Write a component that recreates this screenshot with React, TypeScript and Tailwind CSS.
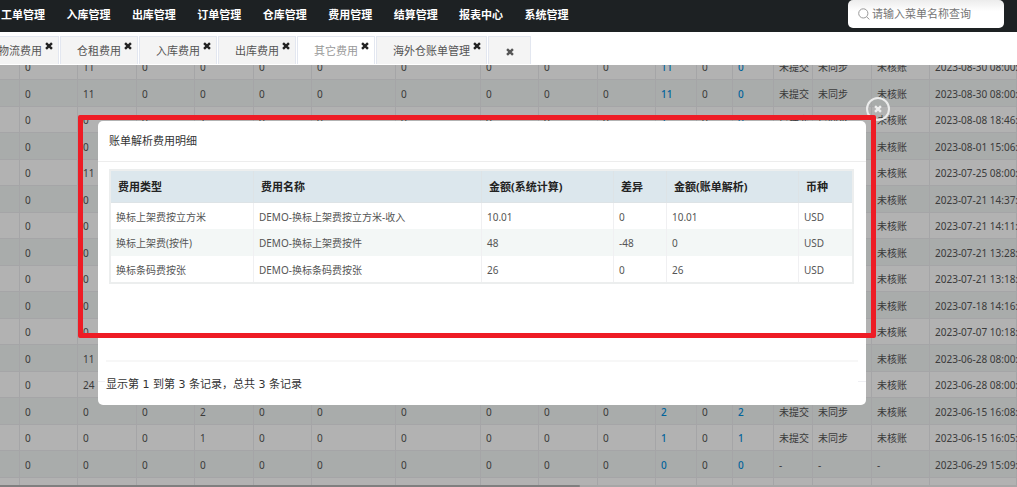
import React from "react";

const menus = ["工单管理", "入库管理", "出库管理", "订单管理", "仓库管理", "费用管理", "结算管理", "报表中心", "系统管理"];
const tabs = ["物流费用", "仓租费用", "入库费用", "出库费用", "其它费用", "海外仓账单管理"];
const activeTab = "其它费用";

const zeros = (n: number): string[] => Array(n).fill("0");
const blanks = (n: number): string[] => Array(n).fill("");

const partial = (first: string, date: string): string[] => ["", "0", first, ...blanks(13), "未核账", date];

const rows: string[][] = [
  ["", "0", "11", ...zeros(8), "11", "0", "0", "未提交", "未同步", "未核账", "2023-08-30 08:00:"],
  ["", "0", "11", ...zeros(8), "11", "0", "0", "未提交", "未同步", "未核账", "2023-08-30 08:00:"],
  ["", "0", "0", "0", "1", ...zeros(6), "1", "0", "0", "已提交", "已同步", "未核账", "2023-08-08 18:46:"],
  partial("0", "2023-08-01 15:06:"),
  partial("11", "2023-07-25 08:00:"),
  partial("0", "2023-07-21 14:37:"),
  partial("0", "2023-07-21 14:11:"),
  partial("0", "2023-07-21 13:28:"),
  partial("0", "2023-07-21 13:18:"),
  partial("0", "2023-07-18 14:16:"),
  partial("0", "2023-07-07 10:18:"),
  partial("11", "2023-06-28 08:00:"),
  partial("24", "2023-06-28 08:00:"),
  ["", "0", "0", "0", "2", ...zeros(6), "2", "0", "2", "未提交", "未同步", "未核账", "2023-06-15 16:08:"],
  ["", "0", "0", "0", "1", ...zeros(6), "1", "0", "1", "未提交", "未同步", "未核账", "2023-06-15 16:05:"],
  ["", "0", "0", "0", "0", ...zeros(6), "0", "0", "0", "-", "-", "-", "2023-06-29 15:09:"],
  blanks(18),
];

const linkColumns = [11, 13];

const detailHeads = ["费用类型", "费用名称", "金额(系统计算)", "差异", "金额(账单解析)", "币种"];
const detailRows = [
  ["换标上架费按立方米", "DEMO-换标上架费按立方米-收入", "10.01", "0", "10.01", "USD"],
  ["换标上架费(按件)", "DEMO-换标上架费按件", "48", "-48", "0", "USD"],
  ["换标条码费按张", "DEMO-换标条码费按张", "26", "0", "26", "USD"],
];

function Cross({ className }: { className: string }) {
  return (
    <svg viewBox="0 0 9 9" className={className} aria-hidden="true">
      <path d="M1.2 1.2 7.8 7.8M7.8 1.2 1.2 7.8" stroke="currentColor" strokeWidth="2.7" fill="none" />
    </svg>
  );
}

function TopBar() {
  return (
    <header className="flex h-8 shrink-0 items-start justify-between bg-[#1d2123] pr-[13px]">
      <nav className="grid h-7 w-[590px] shrink-0 grid-cols-9 items-center pl-px pt-[2px]">
        {menus.map((m) => (
          <a key={m} href="#" className="whitespace-nowrap text-[11px] font-bold leading-4 text-white">
            {m}
          </a>
        ))}
      </nav>
      <label className="flex h-7 w-[156px] items-center gap-[2px] rounded-[5px] bg-linear-to-b from-[#ececec] to-white to-40% pl-[10px]">
        <svg viewBox="0 0 12 12" className="h-3 w-3 shrink-0" aria-hidden="true">
          <circle cx="5.3" cy="5.4" r="4.6" fill="none" stroke="#999" />
          <path d="M8.6 8.8 11.4 11.4" stroke="#999" />
        </svg>
        <input
          type="text"
          aria-label="请输入菜单名称查询"
          placeholder="请输入菜单名称查询"
          className="w-full min-w-0 bg-transparent text-[11px] text-[#555] outline-none placeholder:text-[#757575]"
        />
      </label>
    </header>
  );
}

function TabBar() {
  return (
    <div className="flex h-[33px] shrink-0 items-end overflow-hidden bg-white pb-px">
      <div className="-ml-[19px] flex h-7 gap-px">
        {tabs.map((t) => (
          <div
            key={t}
            className={
              "flex shrink-0 items-start gap-[3px] border border-b-0 border-[#e3e7f0] pl-4 pr-[5px] " +
              (t === activeTab ? "bg-white text-[#999]" : "bg-[#f4f4f4] text-[#555]")
            }
          >
            <a href="#" className="pt-[6px] text-[11px] leading-4">
              {t}
            </a>
            <button type="button" aria-label="关闭" className="pt-[5px] text-[#222]">
              <Cross className="h-2 w-2" />
            </button>
          </div>
        ))}
        <button
          type="button"
          aria-label="关闭全部"
          className="flex w-[43px] items-center justify-center border border-b-0 border-[#e3e7f0] bg-[#f4f4f4] pt-[2px] text-[#555]"
        >
          <Cross className="h-2 w-2" />
        </button>
      </div>
    </div>
  );
}

function BillTable() {
  return (
    <table className="-mt-[11px] w-full table-fixed border-separate border-spacing-0 text-[10px] leading-4 text-[#555]">
      <colgroup>
        <col className="w-5" />
        <col className="w-[58px]" />
        <col className="w-[59px]" />
        <col className="w-[58px]" />
        <col className="w-[59px]" />
        <col className="w-[58px]" />
        <col className="w-[84px]" />
        <col className="w-[85px]" />
        <col className="w-[58px]" />
        <col className="w-[59px]" />
        <col className="w-[58px]" />
        <col className="w-[41px]" />
        <col className="w-9" />
        <col className="w-[41px]" />
        <col className="w-[39px]" />
        <col className="w-[59px]" />
        <col className="w-[58px]" />
        <col />
      </colgroup>
      <tbody>
        {rows.map((row, r) => (
          <tr key={r} className="h-[26px] bg-white even:h-[27px] even:bg-[#f3f6f5]">
            {row.map((v, c) => (
              <td key={c} className="whitespace-nowrap border-b border-r border-[#ededf0] p-0 pl-[5px] pt-px">
                {linkColumns.includes(c) && v ? (
                  <a href="#" className="font-medium text-[#0090e0]">
                    {v}
                  </a>
                ) : (
                  v
                )}
              </td>
            ))}
          </tr>
        ))}
      </tbody>
    </table>
  );
}

function DetailDialog() {
  return (
    <section role="dialog" aria-label="账单解析费用明细" className="relative w-full rounded-[5px] bg-white">
      <h2 className="border-b border-[#ededed] px-[11px] py-3 text-[11px] leading-4 text-[#333]">账单解析费用明细</h2>
      <div className="pl-[11px] pr-3 pt-[7px]">
        <div className="border-2 border-[#eceeee]">
          <table className="w-full table-fixed border-separate border-spacing-0 text-left">
            <colgroup>
              <col className="w-[143px]" />
              <col className="w-[228px]" />
              <col className="w-[132px]" />
              <col className="w-[53px]" />
              <col className="w-[132px]" />
              <col className="w-[53px]" />
            </colgroup>
            <thead>
              <tr className="h-8 bg-[#dce7ed]">
                {detailHeads.map((h) => (
                  <th
                    key={h}
                    className="whitespace-nowrap border-b border-r border-[#dde3e6] p-0 pl-[7px] pt-px text-[11px] font-bold leading-4 text-[#222] last:border-r-0"
                  >
                    {h}
                  </th>
                ))}
              </tr>
            </thead>
            <tbody>
              {detailRows.map((row) => (
                <tr key={row[0]} className="h-[26px] even:h-[27px] even:bg-[#f3f7f6]">
                  {row.map((v, c) => (
                    <td
                      key={c}
                      className="whitespace-nowrap border-r border-[#f0f0f2] p-0 pl-[5px] pt-px text-[10px] leading-4 text-[#555] last:border-r-0"
                    >
                      {v}
                    </td>
                  ))}
                </tr>
              ))}
            </tbody>
          </table>
        </div>
      </div>
      <footer className="mx-2 mt-[76px] border-t-2 border-[#f7f7f7] pb-3 pt-[15px] font-['DejaVu_Sans','Noto_Sans_CJK_SC',sans-serif] text-[11px] leading-4 text-[#333]">
        显示第 1 到第 3 条记录，总共 3 条记录
      </footer>
      <button
        type="button"
        aria-label="关闭"
        className="absolute -right-6 -top-6 flex h-6 w-6 items-center justify-center rounded-full border-2 border-[#ececec] text-[#eee]"
      >
        <Cross className="h-2 w-2" />
      </button>
      <div className="pointer-events-none absolute -left-5 -right-[10px] -top-[6px] h-[223px] rounded-[2px] border-5 border-[#ee1c25]" />
      <span className="absolute bottom-[23px] left-0 h-px w-[7px] bg-[#efeff3]" />
      <span className="absolute bottom-[23px] right-0 h-px w-2 bg-[#efeff3]" />
    </section>
  );
}

export default function App() {
  return (
    <div className="flex h-screen flex-col overflow-hidden bg-white font-['Noto_Sans','Noto_Sans_CJK_SC',sans-serif]">
      <TopBar />
      <TabBar />
      <main className="relative min-h-0 flex-1 overflow-hidden">
        <BillTable />
        <div className="absolute inset-0 flex items-start bg-black/30 pl-[98px] pr-[151px] pt-14">
          <DetailDialog />
        </div>
      </main>
      <div className="h-[2px] shrink-0 bg-[#a6a6a6]">
        <div className="h-full w-[57%] rounded-r bg-[#7f7f7f]" />
      </div>
    </div>
  );
}
